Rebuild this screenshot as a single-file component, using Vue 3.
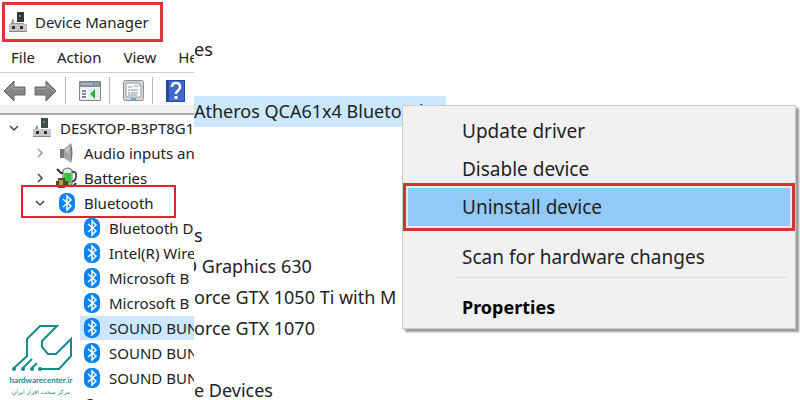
<script setup>
import { ref } from 'vue'

const menus = ['File', 'Action', 'View', 'Help']

const tree = [
  { label: 'DESKTOP-B3PT8G1', icon: 'computer', level: 0, arrow: 'down' },
  { label: 'Audio inputs an', icon: 'speaker', level: 1, arrow: 'right', faint: true },
  { label: 'Batteries', icon: 'battery', level: 1, arrow: 'right' },
  { label: 'Bluetooth', icon: 'bluetooth', level: 1, arrow: 'down', marked: true },
  { label: 'Bluetooth D', icon: 'bluetooth', level: 2 },
  { label: 'Intel(R) Wire', icon: 'bluetooth', level: 2 },
  { label: 'Microsoft B', icon: 'bluetooth', level: 2 },
  { label: 'Microsoft B', icon: 'bluetooth', level: 2 },
  { label: 'SOUND BUN', icon: 'bluetooth', level: 2 },
  { label: 'SOUND BUN', icon: 'bluetooth', level: 2 },
  { label: 'SOUND BUN', icon: 'bluetooth', level: 2 },
  { label: 'Cameras', icon: '', level: 1 }
]
const selected = ref(8)

// empty strings keep the blank lines of the list
const devices = [
  'es', '', 'Atheros QCA61x4 Bluetooth', '', '', '', 's',
  'D Graphics 630', 'orce GTX 1050 Ti with M', 'orce GTX 1070', '', 'e Devices'
]

const actions = [
  { label: 'Update driver' },
  { label: 'Disable device' },
  { label: 'Uninstall device' },
  { separator: true, hidden: true },
  { label: 'Scan for hardware changes' },
  { separator: true },
  { label: 'Properties', bold: true }
]
const current = ref('Uninstall device')
</script>

<template>
  <main>
    <section class="manager">
      <h1>
        <svg width="20" height="22" viewBox="0 0 20 22">
          <path d="M9 1h7v10H9z" fill="#343a3a" />
          <path d="M11 4h2v2h-2z" fill="#39b56a" />
          <path d="M4 9l2-1v4h10l2 3H2z" fill="#999" />
          <path d="M1 13h18v8H1z" fill="#c4c4c4" />
          <path d="M1 20h18v1H1z" fill="#888" />
          <path d="M4 15h3v3H4zM12 15h3v3h-3z" fill="#333" />
        </svg>
        Device Manager
      </h1>

      <nav>
        <button v-for="menu in menus" :key="menu">{{ menu }}</button>
      </nav>

      <div class="toolbar">
        <button aria-label="Back">
          <svg width="23" height="22" viewBox="0 0 23 22">
            <path d="M1 11L11 1v6h11v8H11v6z" fill="#858585" stroke="#666" />
            <path d="M4 11l6-6v4h10" fill="none" stroke="#a5a5a5" />
          </svg>
        </button>
        <button aria-label="Forward">
          <svg width="23" height="22" viewBox="0 0 23 22">
            <path d="M22 11L12 1v6H1v8h11v6z" fill="#858585" stroke="#666" />
            <path d="M19 11l-6-6v4H3" fill="none" stroke="#a5a5a5" />
          </svg>
        </button>
        <i></i>
        <button class="wide" aria-label="Show hidden devices">
          <svg width="22" height="20" viewBox="0 0 22 20">
            <path d="M.5 .5h21v19H.5z" fill="#eee" stroke="#7f858c" />
            <path d="M1 1h20v5H1z" fill="#87919b" />
            <path d="M2 3h12M16 3h1M18 3h1" stroke="#d8dde2" />
            <path d="M2 8h7v10H2z" fill="#fff" />
            <path d="M3 10h4M3 13h4M3 16h4" stroke="#7a8794" stroke-width="2" />
            <path d="M10 8h10v10H10z" fill="#e2f4e5" />
            <path d="M11 13l5-5v10z" fill="#29b34b" />
          </svg>
        </button>
        <i></i>
        <button class="wide" aria-label="Properties">
          <svg width="21" height="22" viewBox="0 0 21 22">
            <rect x=".5" y=".5" width="20" height="20" rx="2" fill="#d5d8da" stroke="#8b9093" />
            <path d="M3 3h13v2h2v12H3z" fill="#f8f8f8" stroke="#9b9b9b" />
            <path d="M5 7h4M11 6h4M5 10h2M8 10h7M5 13h2M8 13h7M5 15h9" stroke="#8e979f" />
            <path d="M8 18h5v2H8z" fill="#45b7e9" />
          </svg>
        </button>
        <i></i>
        <button class="wide" aria-label="Help">
          <svg width="19" height="22" viewBox="0 0 19 22">
            <path d="M0 0h19v22H0z" fill="#2448a8" />
            <path d="M3 1h15v20H3z" fill="#4268cb" />
            <path d="M6 7q0-4 4-4t4 4q0 2-2 3.500t-2 3.500" fill="none" stroke="#fff" stroke-width="2.500" />
            <path d="M8.500 16h3v3h-3z" fill="#fff" />
          </svg>
        </button>
      </div>

      <ul class="tree">
        <li
          v-for="(node, index) in tree"
          :key="index"
          :class="['level' + node.level, { marked: node.marked }]"
          @click="selected = index">
          <svg class="arrow" :class="{ faint: node.faint }" width="10" height="10" viewBox="0 0 10 10">
            <path v-if="node.arrow === 'down'" d="M1 3l4 4 4-4" />
            <path v-if="node.arrow === 'right'" d="M3 1l4 4-4 4" />
          </svg>
          <div class="node" :class="{ selected: selected === index }">
            <svg v-if="node.icon === 'computer'" width="20" height="22" viewBox="0 0 20 22">
              <path d="M9 1h7v10H9z" fill="#444a4a" />
              <path d="M11 4h2v2h-2z" fill="#5e9a77" />
              <path d="M4 9l2-1v4h10l2 3H2z" fill="#999" />
              <path d="M1 12h18v8H1z" fill="#c9c9c9" />
              <path d="M1 19h18v1H1z" fill="#888" />
              <path d="M4 14h3v3H4zM12 14h3v3h-3z" fill="#333" />
            </svg>
            <svg v-else-if="node.icon === 'speaker'" width="18" height="22" viewBox="0 0 18 22">
              <path d="M2 7h4v9H2z" fill="#777" />
              <path d="M6 7l7-6v20l-7-5z" fill="#a5a5a5" />
              <path d="M13 1q3 10 0 20z" fill="#707070" />
              <path d="M7 8l4-4v8z" fill="#c8c8c8" />
            </svg>
            <svg v-else-if="node.icon === 'battery'" class="battery" width="22" height="22" viewBox="0 0 22 22">
              <path d="M1 2l4 4h3" fill="none" stroke="#333" stroke-width="2" />
              <path d="M7 3q5-4 9 0v14q-5 4-9 0z" fill="#dfe8df" stroke="#5b655b" />
              <path d="M8 6h7v10q-4 2-7 0z" fill="#35c53a" />
              <path d="M16 5q5-1 4 5-1 5-4 4" fill="none" stroke="#435048" stroke-width="2" />
              <path d="M2 11h7v3h3v5H9v2H2v-3H0v-4h2z" fill="#55492a" />
              <path d="M3 13h4v5H3z" fill="#b59b4a" />
              <path d="M12 18q5 3 8-2" fill="none" stroke="#333" stroke-width="2" />
            </svg>
            <svg v-else-if="node.icon === 'bluetooth'" width="18" height="22" viewBox="0 0 18 22">
              <rect x="1" y="1" width="16" height="20" rx="7" fill="#0a84f5" />
              <path d="M5 7l8 7-4 4V4l4 4-8 7" fill="none" stroke="#fff" stroke-width="1.500" />
            </svg>
            <svg v-else width="18" height="22"></svg>
            <span>{{ node.label }}</span>
          </div>
        </li>
      </ul>
    </section>

    <section class="details">
      <ul>
        <li v-for="(device, index) in devices" :key="index">
          <span :class="{ selected: index === 2, cut: index === 7 }">{{ device }}</span>
        </li>
      </ul>
    </section>

    <div class="context">
      <template v-for="(action, index) in actions" :key="index">
        <hr v-if="action.separator" :class="{ hidden: action.hidden }">
        <button
          v-else
          :class="{ bold: action.bold, current: current === action.label }"
          @click="current = action.label">{{ action.label }}</button>
      </template>
    </div>

    <a class="logo" href="#">
      <svg width="62" height="48" viewBox="0 0 62 48">
        <g fill="none" stroke="#148b8c" stroke-width="2">
          <path d="M4 44L17 32V15L30 2h17L32 17v6l6 7h8L61 15v17L49 45H30" />
          <path d="M13 44l9-9M22 44l5-5" />
        </g>
        <g fill="#148b8c">
          <circle cx="4" cy="45" r="2" />
          <circle cx="13" cy="45" r="2" />
          <circle cx="22" cy="45" r="2" />
          <circle cx="30" cy="45" r="2" />
        </g>
      </svg>
      <b>hardwarecenter.ir</b>
      <span lang="fa" dir="rtl">مرکز سخت افزار ایران</span>
    </a>
  </main>
</template>

<style>
body {
  margin: 0;
}
</style>

<style scoped>
main {
  position: relative;
  display: flex;
  height: 100vh;
  overflow: hidden;
  background: #fff;
  color: #222;
  font-family: "Noto Sans", "Open Sans", sans-serif;
}

button {
  padding: 0;
  border: 0;
  background: none;
  color: inherit;
  font: inherit;
}

ul {
  margin: 0;
  padding: 0;
  list-style: none;
}

svg {
  display: block;
  flex: none;
}

.manager {
  flex: 0 0 194px;
  overflow: hidden;
  font-size: 15px;
  white-space: nowrap;
}

h1 {
  display: flex;
  align-items: center;
  gap: 7px;
  box-sizing: border-box;
  width: 161px;
  height: 40px;
  margin: 2px 0 0 2px;
  padding-left: 3px;
  border: 3px solid #e03237;
  font-size: 15px;
  font-weight: normal;
}

nav {
  display: flex;
  gap: 22px;
  height: 30px;
  padding-left: 11px;
  border-bottom: 1px solid #ccc;
}

.toolbar {
  display: flex;
  align-items: center;
  gap: 8px;
  height: 29px;
  padding: 3px 0 0 3px;
  border-bottom: 8px solid #f0f0f0;
}

.toolbar i {
  width: 1px;
  height: 27px;
  background: #bbb;
}

.toolbar .wide {
  padding-left: 5px;
}

.tree {
  border-top: 2px solid #aaa;
}

.tree li {
  position: relative;
  display: flex;
  align-items: center;
  gap: 10px;
  height: 25px;
  padding-left: 9px;
}

.tree .level1 {
  padding-left: 35px;
}

.tree .level2 {
  padding-left: 60px;
}

.tree .marked::after {
  content: "";
  position: absolute;
  inset: -5px 18px -3px 21px;
  border: 2px solid #e8222c;
}

.arrow {
  fill: none;
  stroke: #444;
  stroke-width: 1.500;
}

.arrow.faint {
  stroke: #999;
}

.node {
  display: flex;
  flex: 1;
  align-items: center;
  gap: 8px;
  height: 24px;
  padding-left: 3px;
}

.node.selected {
  background: #cce8ff;
}

.battery {
  margin: 0 -2px;
}

.details {
  flex: 1;
  padding-top: 34px;
  overflow: hidden;
  font-size: 18px;
  white-space: nowrap;
}

.details li {
  height: 31px;
  line-height: 31px;
}

.details span {
  display: inline-block;
}

.details .selected {
  padding-right: 16px;
  background: #cce8ff;
}

.details .cut {
  margin-left: -10px;
}

.context {
  position: absolute;
  top: 105px;
  right: 4px;
  left: 402px;
  padding: 6px 4px 2px;
  border: 1px solid #ccc;
  background: #f1f1f1;
  box-shadow: 3px 3px 2px #999;
  font-size: 19px;
}

.context button {
  position: relative;
  display: block;
  width: 100%;
  height: 38px;
  padding-left: 55px;
  text-align: left;
}

.context .bold {
  color: #000;
  font-size: 18px;
  font-weight: bold;
}

.context .current {
  background: #91c9f7;
}

.context .current::after {
  content: "";
  position: absolute;
  inset: -5px -4px;
  border: 3px solid #d4342f;
  box-shadow: inset 0 0 0 2px #e6e6f5;
}

hr {
  height: 1px;
  margin: 1px 4px 10px 49px;
  border: 0;
  background: #dcdcdc;
}

hr.hidden {
  visibility: hidden;
}

.logo {
  position: absolute;
  bottom: 3px;
  left: 10px;
  display: flex;
  flex-direction: column;
  align-items: center;
  width: 62px;
  color: #148b8c;
  font-size: 8px;
  line-height: 11px;
  text-decoration: none;
  white-space: nowrap;
}

.logo svg {
  margin-bottom: 3px;
}

.logo b {
  font-family: Lato, sans-serif;
}

.logo span {
  font-family: "DejaVu Sans", sans-serif;
  font-size: 6px;
}
</style>
